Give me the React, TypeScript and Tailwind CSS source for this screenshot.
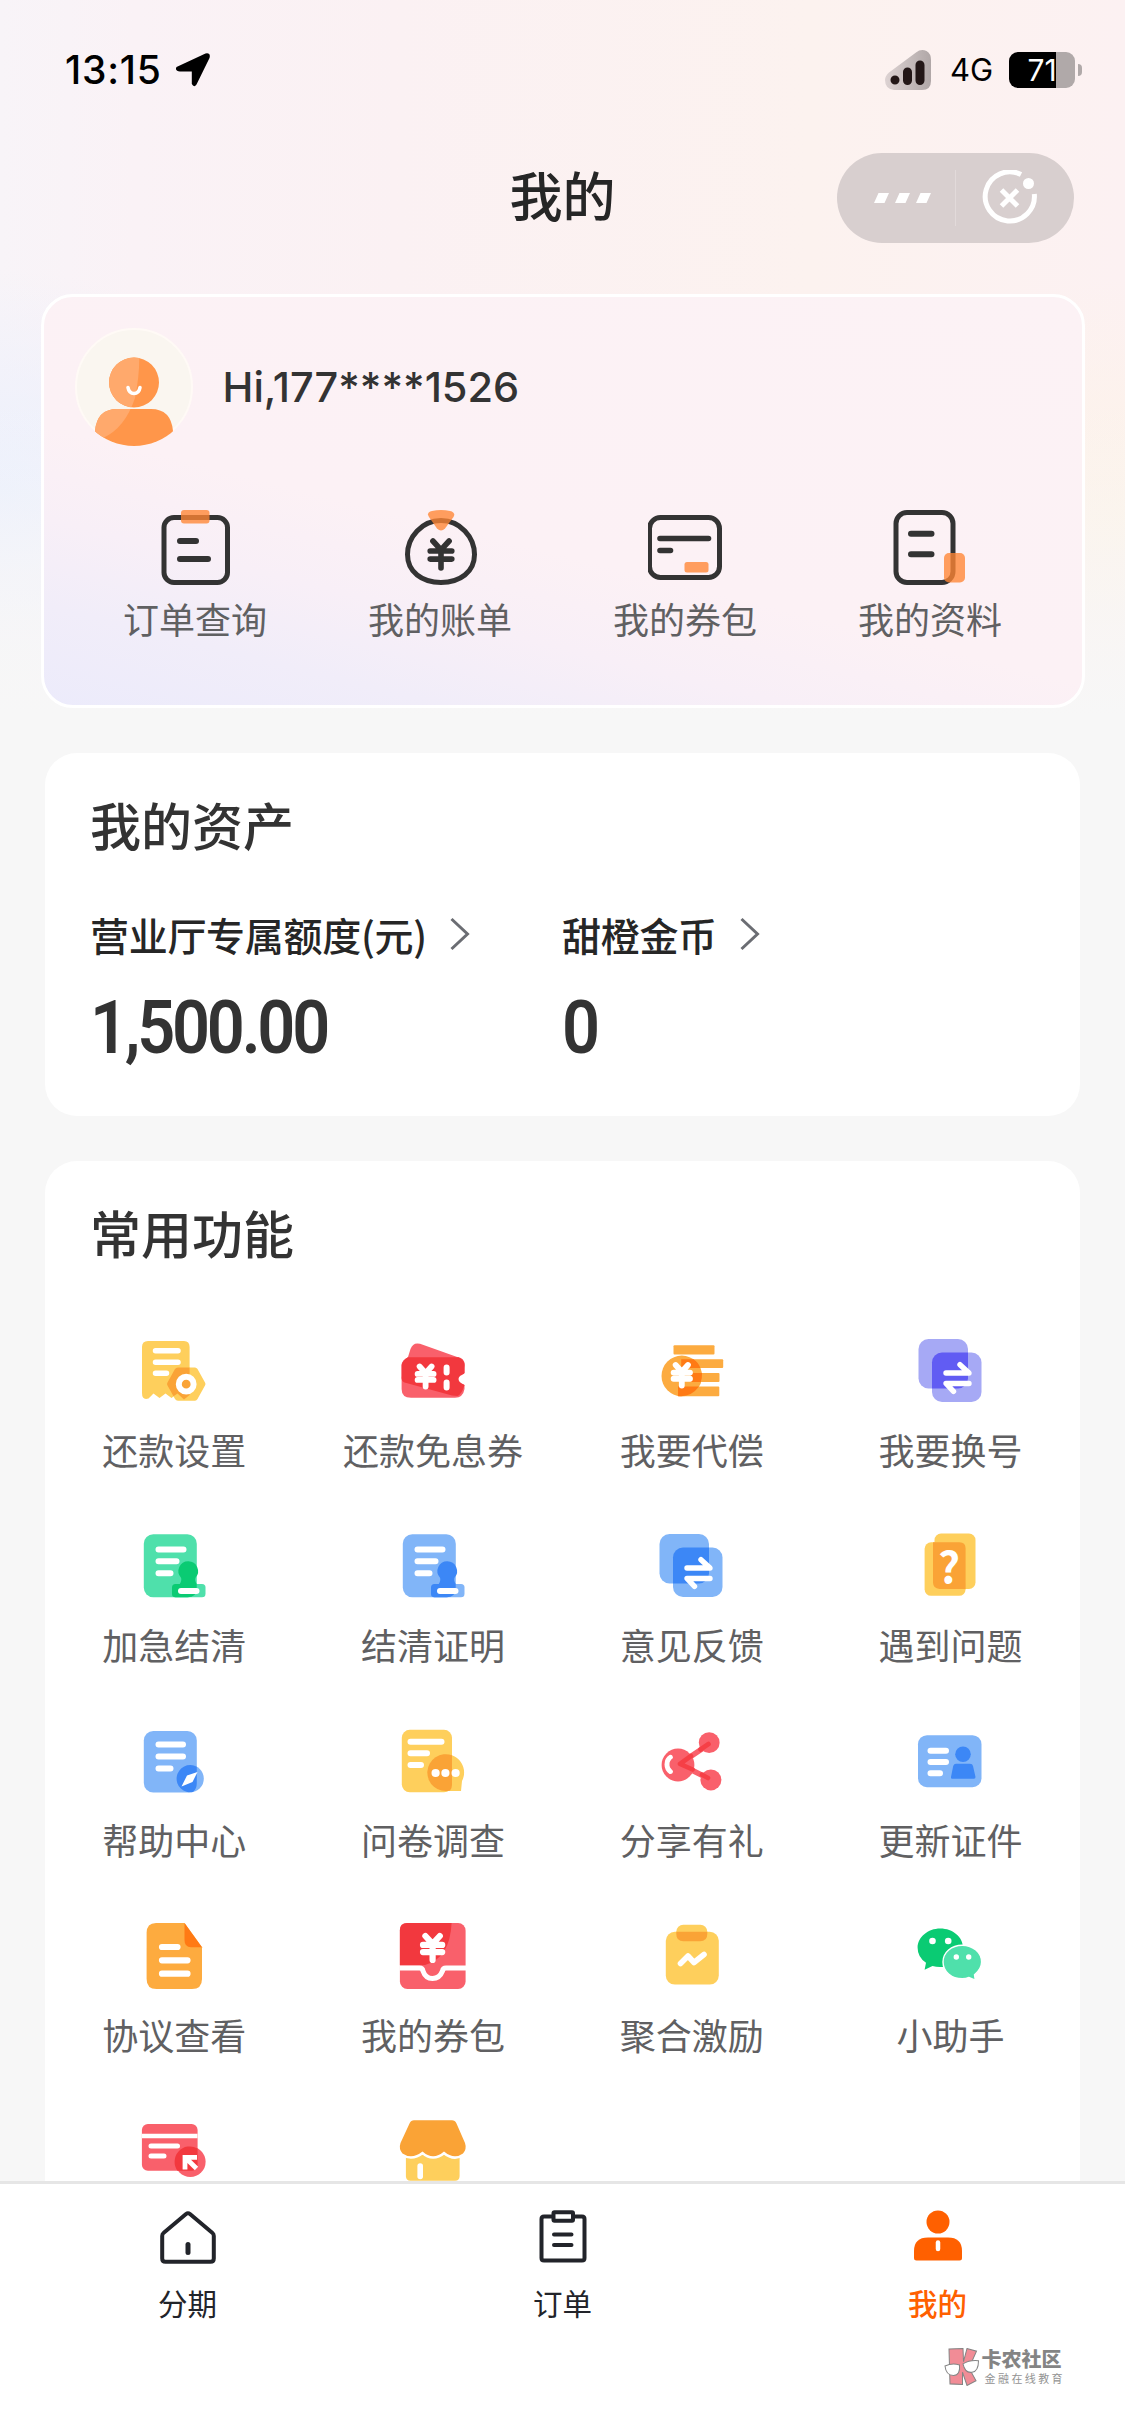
import type { ReactNode } from 'react';

interface IconItem {
    label: string;
    icon: ReactNode;
}

/* ---------- Shared icon pieces ---------- */

function Lines({ d, width = 6 }: { d: string; width?: number }) {
    return (
        <path
            d={d}
            fill="none"
            stroke="#fff"
            strokeWidth={width}
            strokeLinecap="round"
            strokeLinejoin="round"
        />
    );
}

interface YenProps {
    x: number;
    y: number;
    size: number;
    color?: string;
    width?: number;
}

// Yen mark centred on x, with y as its top
function Yen({ x, y, size, color = '#fff', width = 5 }: YenProps) {
    const half = size * 0.4;
    return (
        <path
            d={`M${x - half * 0.75} ${y}L${x} ${y + size * 0.33}L${x + half * 0.75} ${y}M${x - half} ${y + size * 0.37}H${x + half}M${x - half} ${y + size * 0.67}H${x + half}M${x} ${y + size * 0.35}V${y + size}`}
            fill="none"
            stroke={color}
            strokeWidth={width}
            strokeLinecap="round"
            strokeLinejoin="round"
        />
    );
}

function Icon({ children }: { children: ReactNode }) {
    return (
        <svg className="h-[72px] w-[72px]" viewBox="0 0 72 72" aria-hidden="true">
            {children}
        </svg>
    );
}

function ProfileIcon({ children }: { children: ReactNode }) {
    return (
        <svg className="h-[75px] w-[75px]" viewBox="0 0 75 75" fill="none" strokeLinecap="round" aria-hidden="true">
            {children}
        </svg>
    );
}

// Two stacked tiles with opposite half arrows
function SwapIcon({ light, dark }: { light: string; dark: string }) {
    return (
        <Icon>
            <rect x="3.5" y="4" width="49.5" height="49.5" rx="10" fill={light} />
            <rect x="17" y="17.5" width="49.5" height="49.5" rx="10" fill={light} />
            <path d="M27 17.5H53V43.5A10 10 0 0 1 43 53.5H17V27.5A10 10 0 0 1 27 17.5Z" fill={dark} />
            <Lines width={5.4} d="M31 38H54L45 29.700M54 48.500H31L38.500 56.300" />
        </Icon>
    );
}

function StampIcon({ light, dark }: { light: string; dark: string }) {
    return (
        <Icon>
            <rect x="5.8" y="4.2" width="53" height="63" rx="9.5" fill={light} />
            <rect x="34" y="54" width="33.5" height="13.3" rx="3.5" fill={light} />
            <path
                d="M50.3 31.3a9.8 9.8 0 0 1 7.2 16.4Q56.4 50 58.7 54V58.5Q58.7 67.3 49.5 67.3H37.5Q34 67.3 34 64V57.5Q34 54 37.5 54H41.8Q44 50 43 47.7A9.8 9.8 0 0 1 50.3 31.3Z"
                fill={dark}
            />
            <Lines d="M20.500 19.400H45.500M20.500 31.300H38.500M20.500 43.300H32.500" />
            <Lines d="M43 61H58.500" />
        </Icon>
    );
}

/* ---------- Data ---------- */

const profileItems: IconItem[] = [
    {
        label: '订单查询',
        icon: (
            <ProfileIcon>
                <rect x="6" y="7.5" width="63.5" height="65" rx="10" stroke="#333" strokeWidth="5" />
                <path d="M22 31H38M22 49H50" stroke="#333" strokeWidth="6" />
                <rect x="23" y="0" width="28.5" height="13.5" rx="3" fill="#ff8533" opacity=".78" />
            </ProfileIcon>
        ),
    },
    {
        label: '我的账单',
        icon: (
            <ProfileIcon>
                <path
                    d="M38 10.5C57 10.5 71.5 27 71.5 44.5C71.5 62 57 72.500 38 72.500C19 72.500 4.500 62 4.500 44.500C4.500 27 19 10.500 38 10.500Z"
                    stroke="#333"
                    strokeWidth="5"
                />
                <Yen x={38} y={31} size={27} color="#333" width={5.6} />
                <path
                    d="M29 1Q38 -1 47 1Q53 2.5 50.5 7L42 18.5Q38 22.5 34 18.5L26 7Q23 2.5 29 1Z"
                    fill="#ff8533"
                    opacity=".78"
                />
            </ProfileIcon>
        ),
    },
    {
        label: '我的券包',
        icon: (
            <ProfileIcon>
                <rect x="1.5" y="7.5" width="70" height="60" rx="11" stroke="#333" strokeWidth="5" />
                <path d="M12 28.500H60.500M12 40.500H22.500" stroke="#333" strokeWidth="5.600" />
                <rect x="36.500" y="52" width="24" height="10.500" rx="2.500" fill="#ff8533" opacity=".78" />
            </ProfileIcon>
        ),
    },
    {
        label: '我的资料',
        icon: (
            <ProfileIcon>
                <rect x="3" y="2.500" width="57" height="70" rx="11" stroke="#333" strokeWidth="5" />
                <path d="M18 23.700H38.500M18 44.300H38.500" stroke="#333" strokeWidth="6" />
                <rect x="51" y="43" width="21" height="29.500" rx="5" fill="#ff8533" opacity=".78" />
            </ProfileIcon>
        ),
    },
];

const functionItems: IconItem[] = [
    {
        label: '还款设置',
        icon: (
            <Icon>
                <path
                    d="M10 6H46Q51.6 6 51.6 12V60L46 64.5L39.5 58.5L33.5 63L27.5 58.5L21.5 63L15.5 58.5L10.5 63.5Q4 65.5 4 58V12Q4 6 10 6Z"
                    fill="#fecf5c"
                />
                <path
                    d="M40 32.5H57Q58.5 32.5 59.5 34L67 47.5Q68 49 67 50.5L59.5 64Q58.5 65.7 57 65.7H40Q38 65.7 37 64L29.5 50.5Q28.5 49 29.5 47.5L37 34Q38 32.5 40 32.5Z"
                    fill="#fecf5c"
                />
                <path
                    d="M40 32.5H51.6V60L46 64.5L39.5 58.5L35.5 61.3L29.5 50.5Q28.5 49 29.5 47.5L37 34Q38 32.5 40 32.5Z"
                    fill="#faa336"
                />
                <Lines width={5.5} d="M17.500 15.700H40M17.500 27.200H40M17.500 38.300H28.500" />
                <circle cx="48.200" cy="49.200" r="7.400" fill="#faa336" stroke="#fff" strokeWidth="6" />
            </Icon>
        ),
    },
    {
        label: '还款免息券',
        icon: (
            <Icon>
                <path d="M23 8.8L63 23Q69 26 67 33L59 61L7 47Q4 45 5 41L13.5 14Q16 7 23 8.8Z" fill="#f9606b" />
                <path
                    d="M11 22.3H60Q67.5 22.3 67.5 30V38Q60 44 67.5 50V54Q66 62.7 58 62.7H14Q4.6 62.7 4.6 54V30Q5 25 11 22.3Z"
                    fill="#f9606b"
                />
                <path
                    d="M11 22.3H61.5Q67.5 25 67.5 30V38Q60 44 67.5 50Q65 59 60.5 61L55 60.5L7.5 47.5Q4.6 46.5 4.6 43V30Q6 25 11 22.3Z"
                    fill="#f2383e"
                />
                <path d="M69 38.500Q61.500 40 61.500 44Q61.500 48 69 50Z" fill="#fff" />
                <Yen x={28.6} y={31.5} size={20} width={5.8} />
                <Lines d="M49.600 32.500V37.500M49.600 47.500V52.500" />
            </Icon>
        ),
    },
    {
        label: '我要代偿',
        icon: (
            <Icon>
                <g fill="#fcab40">
                    <rect x="17.500" y="10.200" width="41" height="9.200" rx="1" />
                    <rect x="25.200" y="24.300" width="42" height="8.800" rx="1" />
                    <rect x="43" y="38" width="20.500" height="9" rx="1" />
                    <rect x="21.800" y="51.600" width="41.500" height="9.600" rx="1" />
                    <circle cx="25.800" cy="40.900" r="20.300" />
                </g>
                <path
                    d="M25.200 24.300H37.500Q42.500 27.500 44.400 33.100H25.200ZM35 38H46Q46.200 43 44.800 47H35ZM22 51.600H43Q36 61.200 25 61.200H22Z"
                    fill="#ff7a14"
                />
                <Yen x={25.8} y={30} size={20.5} width={5.8} />
            </Icon>
        ),
    },
    { label: '我要换号', icon: <SwapIcon light="#a6a9f5" dark="#615cf3" /> },
    { label: '加急结清', icon: <StampIcon light="#4fe0ab" dark="#0acb73" /> },
    { label: '结清证明', icon: <StampIcon light="#81b5f8" dark="#3c87f6" /> },
    { label: '意见反馈', icon: <SwapIcon light="#81b5f8" dark="#3c87f6" /> },
    {
        label: '遇到问题',
        icon: (
            <Icon>
                <rect x="19.500" y="3.500" width="41" height="55.500" rx="6.500" fill="#fecf5c" />
                <rect x="9.600" y="12.300" width="41" height="53.500" rx="6.500" fill="#fecf5c" />
                <path d="M24 12.300H44.500Q50.600 12.300 50.600 18.500V59H24.500Q18 58 18 52.500V12.300Z" fill="#faa336" />
                <text
                    x="34"
                    y="52.500"
                    textAnchor="middle"
                    fill="#fff"
                    fontSize="43"
                    fontWeight="700"
                    fontFamily="'Noto Sans CJK SC', sans-serif"
                >
                    ?
                </text>
            </Icon>
        ),
    },
    {
        label: '帮助中心',
        icon: (
            <Icon>
                <rect x="5.800" y="6" width="53" height="61.500" rx="9.500" fill="#81b5f8" />
                <circle cx="52.200" cy="53.700" r="13.600" fill="#81b5f8" />
                <path d="M58.800 41.800V58Q58.800 64 55 67A13.600 13.600 0 1 1 58.800 41.800Z" fill="#3c87f6" />
                <Lines d="M20.500 19.400H45M20.500 31.400H45M20.500 43.400H32.500" />
                <path d="M43.500 61.500L49 50.500L59.500 47L54.500 57Z" fill="#fff" />
            </Icon>
        ),
    },
    {
        label: '问卷调查',
        icon: (
            <Icon>
                <rect x="4.800" y="4.800" width="50.200" height="62.500" rx="8" fill="#fecf5c" />
                <path d="M48.600 29.200A18.300 18.300 0 0 1 65 56L64 66H48.600A18.400 18.400 0 0 1 48.600 29.200Z" fill="#fecf5c" />
                <path d="M55 30.300V60Q55 63 53 65.500A18.400 18.400 0 1 1 55 30.300Z" fill="#faa336" />
                <Lines d="M13.500 16.700H44.500M13.500 28.200H30M13.500 40H24" />
                <g fill="#fff">
                    <circle cx="38.600" cy="48" r="4.100" />
                    <circle cx="48.400" cy="48" r="4.100" />
                    <circle cx="58.600" cy="48" r="4.100" />
                </g>
            </Icon>
        ),
    },
    {
        label: '分享有礼',
        icon: (
            <Icon>
                <path d="M23.500 39L52.500 19.500M23.500 39L52.500 53.500" stroke="#f9606b" strokeWidth="5.500" />
                <circle cx="22" cy="40" r="16.400" fill="#f9606b" />
                <circle cx="53.200" cy="17.700" r="10.400" fill="#f9606b" />
                <circle cx="54.900" cy="54.900" r="10.500" fill="#f9606b" />
                <path
                    d="M35 31L24 38.800L36.500 44.500M44.500 24.500L52.500 19M46 49.700L52 53"
                    fill="none"
                    stroke="#f63f46"
                    strokeWidth="4.600"
                    strokeLinecap="round"
                    strokeLinejoin="round"
                />
                <path d="M13.500 30Q8.500 33 8.500 39.500Q8.500 45.500 13.500 49Q17 49.500 17 46Q13 42 13.500 39.500Q13 36 17 33Q16.500 29 13.500 30Z" fill="#fff" />
            </Icon>
        ),
    },
    {
        label: '更新证件',
        icon: (
            <Icon>
                <rect x="3" y="10.200" width="63.500" height="52" rx="9" fill="#81b5f8" />
                <Lines d="M15.500 25.700H31M15.500 37H31M15.500 48.200H25" />
                <circle cx="48" cy="29.300" r="7.800" fill="#3c87f6" />
                <path d="M41 38.800H55Q57.500 38.800 58 41L60.500 52Q60.500 53.700 59 53.700H37Q35.500 53.700 36 52L38.200 41Q39 38.800 41 38.800Z" fill="#3c87f6" />
            </Icon>
        ),
    },
    {
        label: '协议查看',
        icon: (
            <Icon>
                <path d="M18 3H46.500L64 27.300V59Q64 69 54 69H18.500Q8.600 69 8.600 59V13Q8.600 3 18 3Z" fill="#fdab3f" />
                <path d="M46.500 3L64 27.300H53Q46.500 27.300 46.500 20Z" fill="#ff7a14" />
                <Lines width={6.2} d="M24 27H39.500M24 40.300H49.500M24 53.700H49.500" />
            </Icon>
        ),
    },
    {
        label: '我的券包',
        icon: (
            <Icon>
                <rect x="2.900" y="3" width="65.700" height="66" rx="7.500" fill="#f9606b" />
                <path d="M10 3H54.600Q53 38 28 45H2.900V10Q2.900 3 10 3Z" fill="#f2383e" />
                <path
                    d="M2.500 48H22.500Q25.500 48 26 51Q28.500 58.500 35.500 58.500Q42.500 58.500 45.500 51Q46 48 49 48H69"
                    fill="none"
                    stroke="#fff"
                    strokeWidth="5"
                />
                <Yen x={35.6} y={16} size={24} width={6.2} />
            </Icon>
        ),
    },
    {
        label: '聚合激励',
        icon: (
            <Icon>
                <rect x="9.800" y="11.800" width="53" height="52.800" rx="9" fill="#fecf5c" />
                <rect x="20.300" y="4.800" width="31" height="16.500" rx="7" fill="#fecf5c" />
                <path d="M20.300 11.800H51.300V14Q51.300 21.300 44 21.300H27.500Q20.300 21.300 20.300 14Z" fill="#faa336" />
                <Lines width={5.6} d="M24.500 43.500L32 36L38 42.500L48 34.500" />
            </Icon>
        ),
    },
    {
        label: '小助手',
        icon: (
            <Icon>
                <path
                    d="M25.200 8.400C38 8.400 48 17 48 27.700C48 38.500 38 47 25.200 47Q21 47 17.500 46L9.600 49.800L11 42.800Q2.600 37 2.600 27.700C2.600 17 13 8.400 25.200 8.400Z"
                    fill="#0acb73"
                />
                <path
                    d="M47.200 25.200C58 25.200 66.600 32.500 66.600 42Q66.600 49 59.500 54.700L60.300 60.200L54 57.500Q51 58.800 47.200 58.800C36.500 58.800 28 51.500 28 42C28 32.500 36.500 25.200 47.200 25.200Z"
                    fill="#4fe0ab"
                    stroke="#fff"
                    strokeWidth="1.400"
                />
                <g fill="#fff">
                    <circle cx="17.500" cy="21" r="3.300" />
                    <circle cx="33.200" cy="21" r="3.300" />
                    <circle cx="41.300" cy="37" r="2.700" />
                    <circle cx="53.700" cy="37" r="2.700" />
                </g>
            </Icon>
        ),
    },
    {
        label: '',
        icon: (
            <Icon>
                <rect x="3.900" y="9" width="55.700" height="46.700" rx="6" fill="#f9606b" />
                <circle cx="52.300" cy="46.800" r="15.300" fill="#f9606b" />
                <path d="M59.600 33.500V50Q59.600 55.700 54 55.700H39.500A15.300 15.300 0 0 1 59.600 33.500Z" fill="#f2383e" />
                <Lines width={5} d="M13 31H39.500M13 41H26" />
                <path d="M4 21H59.500" stroke="#fff" strokeWidth="4.500" />
                <path d="M47 54.500V42.300H59M47.500 42.800L58.500 53.500" fill="none" stroke="#fff" strokeWidth="4.800" />
            </Icon>
        ),
    },
    {
        label: '',
        icon: (
            <Icon>
                <path d="M8.900 40H62.600V61Q62.600 65.800 58 65.800H13.500Q8.900 65.800 8.900 61Z" fill="#fecf5c" />
                <path
                    d="M17 5.200H55Q58 5.200 59.500 8.500L68 28Q70 34 66 38.500Q57 45 47 36.500Q36 46 25.500 36.500Q15 45 5.500 38.500Q1.500 34 3.500 28L12.500 8.500Q14 5.200 17 5.200Z"
                    fill="#faa336"
                    stroke="#fff"
                    strokeWidth="5"
                    paintOrder="stroke"
                />
                <path d="M23.200 51V61.500" stroke="#fff" strokeWidth="5.600" strokeLinecap="round" />
            </Icon>
        ),
    },
];

/* ---------- Sections ---------- */

function StatusBar() {
    return (
        <div className="flex h-[140px] shrink-0 items-center justify-between pr-[43px] pl-[65px]">
            <div className="flex items-center">
                <span className="w-[111px] font-['Inter',sans-serif] text-[39px] leading-[48px] font-medium tracking-[0.8px] text-black">
                    13:15
                </span>
                <svg className="h-[34px] w-[34px]" viewBox="0 0 34 34" aria-hidden="true">
                    <path d="M29.500 .5Q35 -.5 33.500 5L20.500 31.500Q18 35 15.800 31V18.500H4Q-1.500 18 .5 14Z" fill="#000" />
                </svg>
            </div>
            <div className="flex items-center">
                <svg className="h-[40px] w-[46px]" viewBox="0 0 46 40" aria-hidden="true">
                    <defs>
                        <linearGradient id="signal">
                            <stop offset="0" stopColor="#ddd3d3" />
                            <stop offset="1" stopColor="#b0a7a7" />
                        </linearGradient>
                    </defs>
                    <path d="M31 2.500Q36 -1.500 41.500 1Q46 3.500 46 10V31Q46 40 37 40H9Q0 39 0 30Q0 26 4 22.500Z" fill="url(#signal)" />
                    <path d="M10 30V30.100M22.500 22V30.500M35 15V30.500" stroke="#231717" strokeWidth="9" strokeLinecap="round" />
                </svg>
                <span className="ml-[19px] w-[59px] font-['Inter',sans-serif] text-[31px] leading-10 text-black">4G</span>
                <div className="flex h-9 w-[66px] items-center justify-center overflow-hidden rounded-[9px] bg-[linear-gradient(90deg,#000_71%,#b0a9a9_71%)]">
                    <span className="font-['Inter',sans-serif] text-[30px] leading-9 text-white">71</span>
                </div>
                <div className="ml-[3px] h-3 w-1 rounded-r-full bg-[#b0a9a9]" />
            </div>
        </div>
    );
}

function NavBar() {
    return (
        <div className="grid h-[116px] shrink-0 grid-cols-[1fr_auto_1fr] items-center px-[51px]">
            <span />
            <h1 className="pb-[9px] text-[53px] leading-[76px] font-medium text-[#262626]">我的</h1>
            <div className="flex h-[90px] w-[237px] items-center justify-self-end rounded-full bg-[#d8cfcf]">
                <div className="flex flex-1 justify-center">
                    <svg className="ml-[13px] h-[10px] w-[57px]" viewBox="0 0 57 10" fill="#fff" aria-hidden="true">
                        <path d="M4.500 0H15L10.500 10H0ZM25.500 0H36L31.500 10H21ZM46.500 0H57L52.500 10H42Z" />
                    </svg>
                </div>
                <div className="h-14 w-px bg-[#e2dada]" />
                <div className="flex flex-1 justify-center">
                    <svg className="mr-[10px] h-[56px] w-[56px]" viewBox="0 0 56 56" fill="none" stroke="#fff" aria-hidden="true">
                        <path d="M39 4.500A24.600 24.600 0 1 0 52.300 24" strokeWidth="5" />
                        <path d="M19.500 20L35.500 36M35.500 20L19.500 36" strokeWidth="5" />
                        <circle cx="46.500" cy="13.500" r="5.500" fill="#fff" stroke="none" />
                    </svg>
                </div>
            </div>
        </div>
    );
}

function Avatar() {
    return (
        <svg className="h-[118px] w-[118px]" viewBox="0 0 118 118" aria-hidden="true">
            <defs>
                <clipPath id="avatar-round">
                    <circle cx="59" cy="59" r="59" />
                </clipPath>
                <clipPath id="avatar-person">
                    <circle cx="59" cy="54.500" r="25" />
                    <path d="M20 110V103Q22 81 42 81H76Q96 81 98 103V118H20Z" />
                </clipPath>
            </defs>
            <circle cx="59" cy="59" r="58" fill="#faf6f0" stroke="#fffaf6" strokeWidth="2" />
            <g clipPath="url(#avatar-round)">
                <g clipPath="url(#avatar-person)">
                    <rect width="118" height="118" fill="#ff964a" />
                    <path d="M0 0H61Q68 30 60 70Q50 100 28 110H0Z" fill="#ffa96c" />
                </g>
            </g>
            <path d="M53 59.500Q54 65.500 59 65.500Q64 65.500 65 59.500" fill="none" stroke="#fff" strokeWidth="3.600" strokeLinecap="round" />
        </svg>
    );
}

function ProfileCard() {
    return (
        <section className="mx-auto mt-[38px] h-[414px] w-[1044px] shrink-0 rounded-[32px] border-[3px] border-white bg-[linear-gradient(14deg,#ecebfb_0%,#f1edf9_15%,#f8eff7_28%,#fcf1f5_42%,#fcf2f5_100%)] pt-[31px]">
            <div className="flex items-center gap-[30px] pl-[31px]">
                <Avatar />
                <span className="font-['Inter',sans-serif] text-[41.5px] leading-[54px] font-medium text-[#333]">
                    Hi,177****1526
                </span>
            </div>
            <div className="mt-16 grid grid-cols-4 px-[29px]">
                {profileItems.map((item) => (
                    <div key={item.label} className="flex flex-col items-center">
                        {item.icon}
                        <span className="mt-[6px] text-[36px] leading-[54px] text-[#606062]">{item.label}</span>
                    </div>
                ))}
            </div>
        </section>
    );
}

function Asset({ label, value }: { label: string; value: string }) {
    return (
        <div>
            <div className="flex h-[58px] items-center">
                <span className="text-[39px] leading-[58px] font-medium tracking-[-0.3px] text-[#262626]">{label}</span>
                <svg className="ml-[23px] h-[34px] w-5" viewBox="0 0 20 34" fill="none" aria-hidden="true">
                    <path d="M1.500 2L17.500 17L1.500 32" stroke="#6b6d73" strokeWidth="3" />
                </svg>
            </div>
            <p className="mt-[23px] origin-left scale-x-90 font-['Roboto',sans-serif] text-[74px] leading-[84px] font-semibold tracking-[-3.6px] text-[#333]">
                {value}
            </p>
        </div>
    );
}

function AssetsCard() {
    return (
        <section className="mx-[45px] mt-[45px] h-[363px] shrink-0 rounded-[32px] bg-white pt-[35px] pl-[45px]">
            <h2 className="text-[51px] leading-[72px] font-medium text-[#333]">我的资产</h2>
            <div className="mt-[45px] grid grid-cols-[472px_1fr]">
                <Asset label="营业厅专属额度(元)" value="1,500.00" />
                <Asset label="甜橙金币" value="0" />
            </div>
        </section>
    );
}

function FunctionsCard() {
    return (
        <section className="mx-[45px] mt-[45px] shrink-0 rounded-t-[32px] bg-white pt-[35px]">
            <h2 className="pl-[45px] text-[51px] leading-[72px] font-medium text-[#333]">常用功能</h2>
            <div className="mt-[67px] grid auto-rows-[195px] grid-cols-4">
                {functionItems.map((item, index) => (
                    <div key={index} className="flex flex-col items-center">
                        {item.icon}
                        <span className="mt-[15px] text-[36px] leading-[54px] text-[#606062]">{item.label}</span>
                    </div>
                ))}
            </div>
        </section>
    );
}

function Watermark() {
    return (
        <div className="mt-1 flex items-center self-end pr-[60px] opacity-90">
            <svg className="h-[38px] w-[36px]" viewBox="0 0 36 36" preserveAspectRatio="none" fill="#f0808b" stroke="#777" strokeWidth="1" aria-hidden="true">
                <path d="M5 1L19 0.500L19.500 13L23 0.500L32.500 3L25 19L32 31L23 35.500L18.500 23V34.500L6 34Z" />
                <path d="M1 17Q8 14 15.500 16Q16.500 26 9.500 26Q2 26 1 17ZM19 15Q26 11 34.500 12Q34.500 22 28 23Q21 24 19 15Z" fill="#fff" />
            </svg>
            <div className="ml-[2px] flex flex-col">
                <span className="text-[20px] leading-[22px] font-black text-[#777]">卡农社区</span>
                <span className="pl-[3px] text-[11px] leading-[16px] tracking-[2.4px] text-[#888]">金融在线教育</span>
            </div>
        </div>
    );
}

function TabBar() {
    return (
        <footer className="flex h-[255px] shrink-0 flex-col border-t-[3px] border-[#e6e6e6] bg-white">
            <nav className="grid h-[160px] grid-cols-3 pt-[24px] text-[29.5px] leading-[44px] text-[#22242a]">
                <div className="flex flex-col items-center gap-[14px]">
                    <svg className="h-[58px] w-[60px]" viewBox="0 0 60 58" fill="none" stroke="#22242a" strokeWidth="4" aria-hidden="true">
                        <path d="M28 6Q30 4.500 32 6L54.500 25Q55.800 26 55.800 28V50.500Q55.800 53.800 52.500 53.800H7.500Q4.200 53.800 4.200 50.500V28Q4.200 26 5.500 25Z" />
                        <path d="M30 36.500V44.500" strokeWidth="5" strokeLinecap="round" />
                    </svg>
                    分期
                </div>
                <div className="flex flex-col items-center gap-[14px]">
                    <svg className="h-[58px] w-[60px]" viewBox="0 0 60 58" fill="none" stroke="#22242a" strokeWidth="4" aria-hidden="true">
                        <path d="M19 8.500H11Q8.500 8.500 8.500 11V50Q8.500 52.500 11 52.500H49Q51.500 52.500 51.500 50V11Q51.500 8.500 49 8.500H41" />
                        <rect x="20.500" y="4.300" width="19.500" height="8.500" rx="1" />
                        <path d="M21 26.500H38.500M21 37H38.500" strokeLinecap="round" />
                    </svg>
                    订单
                </div>
                <div className="flex flex-col items-center gap-[14px] font-medium text-[#ff6000]">
                    <svg className="h-[58px] w-[60px]" viewBox="0 0 60 58" fill="#ff6000" aria-hidden="true">
                        <circle cx="30" cy="14" r="11.500" />
                        <path d="M20 29.500H40Q54 29.500 54 43V50Q54 52.500 51.500 52.500H8.500Q6 52.500 6 50V43Q6 29.500 20 29.500Z" />
                        <path d="M30 34.500V41" stroke="#fff" strokeWidth="4.500" strokeLinecap="round" />
                    </svg>
                    我的
                </div>
            </nav>
            <Watermark />
        </footer>
    );
}

export default function App() {
    return (
        <div className="flex h-[2436px] w-[1125px] flex-col overflow-hidden bg-[#f7f7f7] font-['Noto_Sans_CJK_SC',sans-serif]">
            <main className="flex min-h-0 flex-1 flex-col overflow-hidden bg-[linear-gradient(180deg,transparent_400px,#f7f7f7_715px),radial-gradient(300px_220px_at_0px_490px,#ebf0fd_0%,transparent_100%),radial-gradient(300px_240px_at_1125px_520px,#fdf3e8_0%,transparent_100%),linear-gradient(90deg,#f8f4f8_0%,#faf2f6_12%,#fbf1f3_35%,#fcf2ef_72%,#fcf1f2_100%)]">
                <StatusBar />
                <NavBar />
                <ProfileCard />
                <AssetsCard />
                <FunctionsCard />
            </main>
            <TabBar />
        </div>
    );
}
